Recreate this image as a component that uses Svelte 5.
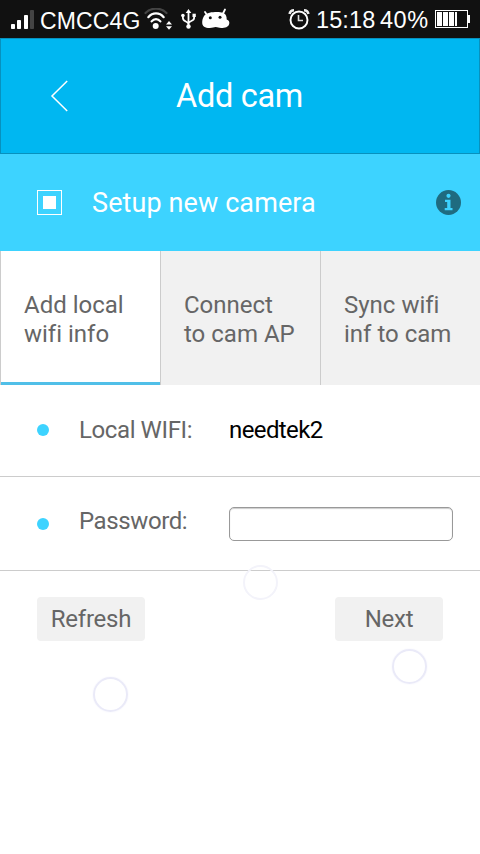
<script>
  const tabs = [
    ['Add local', 'wifi info'],
    ['Connect', 'to cam AP'],
    ['Sync wifi', 'inf to cam']
  ];
  let active = $state(0);
  let password = $state('');
  const touches = [
    { x: 260.5, y: 582.5, faint: true },
    { x: 409.5, y: 666.5, faint: false },
    { x: 110.5, y: 694.5, faint: false }
  ];
</script>

<div class="screen">
  <div class="status">
    <svg class="signal" width="24" height="20" viewBox="0 0 24 20">
      <g fill="#fff">
        <rect x="1" y="14" width="4" height="5" rx=".8" />
        <rect x="7" y="10" width="4" height="9" rx=".8" />
        <rect x="14" y="5" width="4" height="14" rx=".8" />
      </g>
      <rect x="20" y="0" width="4" height="19" rx=".8" fill="#444" />
    </svg>
    <span class="carrier">CMCC4G</span>
    <svg class="wifi" width="29" height="24" viewBox="0 0 29 24">
      <g fill="none" stroke-linecap="round">
        <path d="M1.500 5C7-.8 17-.8 22.500 5" stroke="#444" stroke-width="2.200" />
        <path d="M4.300 9.200C8.500 4.200 15.500 4.200 19.700 9.200M7.600 13.400C10 10.400 14 10.400 16.400 13.400" stroke="#fff" stroke-width="2.200" />
      </g>
      <circle cx="11.700" cy="18" r="3" fill="#fff" />
      <path d="M22 16.500 25 13l3 3.500zM22 18.300h6l-3 3.500z" fill="#fff" />
    </svg>
    <svg class="usb" width="15" height="21" viewBox="0 0 15 21">
      <path d="M7.500 3v14M7.500 15C7 12 1.900 13 1.900 9V7M7.500 14.500c.5-3 5.600-2 5.600-5.500V6" fill="none" stroke="#fff" stroke-width="1.800" />
      <path d="m7.500 0 2.800 4H4.700z" fill="#fff" />
      <circle cx="1.900" cy="6.500" r="1.800" fill="#fff" />
      <rect x="11.500" y="4.700" width="3.300" height="3.300" fill="#fff" />
      <circle cx="7.500" cy="17.500" r="2.200" fill="#fff" />
    </svg>
    <svg class="droid" width="29" height="21" viewBox="0 0 29 21">
      <path d="M4 4l2 3M24 1.500l-2 4" stroke="#fff" stroke-width="1.800" stroke-linecap="round" />
      <path d="M2.500 9C4 5.500 9 4.200 14 4c5-.3 9.500.2 11 3.500.6 1.500.7 2.800.7 4 2.300.5 3 2.500 2.500 4.500-.8 3-4.200 4-8 4-2.500 0-3.500-1-5.500-1s-3 1-6 1C4 20 1.200 18.500 1.200 14.500c0-2 .5-4 1.300-5.500z" fill="#fff" />
      <circle cx="9.300" cy="9.700" r="1.500" fill="#111" />
      <circle cx="19" cy="9.200" r="1.500" fill="#111" />
    </svg>
    <svg class="alarm" width="22" height="21" viewBox="0 0 22 21">
      <circle cx="11" cy="11" r="8.500" fill="none" stroke="#fff" stroke-width="1.900" />
      <path d="M10.500 6v5.500h4.500" fill="none" stroke="#ddd" stroke-width="1.600" />
      <path d="M1.600 5C2 2.500 3.500 1.300 6 1.300M20.400 5C20 2.500 18.500 1.300 16 1.300" fill="none" stroke="#eee" stroke-width="2.600" />
    </svg>
    <span class="clock">15:18</span>
    <span class="percent">40%</span>
    <svg class="battery" width="35" height="18" viewBox="0 0 35 18">
      <rect x=".5" y=".5" width="32" height="17" fill="none" stroke="#fff" />
      <path d="M2 2h5v14H2zM8 2h5v14H8zM14 2h5v14h-5zM20 2h2v14h-2zM33 5h2v8h-2z" fill="#fff" />
    </svg>
  </div>

  <header>
    <svg class="back" width="20" height="34" viewBox="0 0 20 34">
      <path d="M17.200 2 2 17l15.200 15" fill="none" stroke="#fff" stroke-width="1.500" />
    </svg>
    <h1>Add cam</h1>
  </header>

  <section class="setup">
    <span class="check"><span></span></span>
    <h2>Setup new camera</h2>
    <svg class="info" width="26" height="26" viewBox="0 0 26 26">
      <circle cx="12.500" cy="12.500" r="12.500" fill="#1f6b80" />
      <circle cx="12.500" cy="5.800" r="2.100" fill="#3dd3ff" />
      <path d="M9 9.700h5.500V18H16.500V20.200H8.700V18h2.500v-6.100H9z" fill="#3dd3ff" />
    </svg>
  </section>

  <nav>
    {#each tabs as lines, i}
      <button class="tab" class:active={active === i} onclick={() => (active = i)}>
        <span>{lines[0]}</span><span>{lines[1]}</span>
      </button>
    {/each}
  </nav>

  <div class="row network">
    <i class="dot"></i>
    <span class="label">Local WIFI:</span>
    <span class="value">needtek2</span>
  </div>
  <div class="row secret">
    <i class="dot"></i>
    <label class="label" for="pw">Password:</label>
    <input id="pw" type="password" bind:value={password} />
  </div>

  <div class="actions">
    <button>Refresh</button>
    <button>Next</button>
  </div>

  {#each touches as t}
    <i class="touch" class:faint={t.faint} style="left:{t.x}px;top:{t.y}px"></i>
  {/each}
</div>

<style>
  :global(body) { background: #fff; }
  .screen {
    position: relative;
    width: 480px;
    height: 854px;
    overflow: hidden;
    background: #fff;
    font-family: Roboto, sans-serif;
    color: #666;
  }
  .screen * { box-sizing: border-box; }
  svg { display: block; flex: none; }
  button { border: 0; margin: 0; color: inherit; font-family: inherit; }
  h1, h2 { margin: 0; color: #fff; font-weight: 400; white-space: nowrap; }
  .status {
    display: flex;
    align-items: flex-start;
    height: 38px;
    background: #111;
    color: #fff;
    font: 23px/26px "Liberation Sans", Arial, sans-serif;
    white-space: nowrap;
  }
  .signal { margin: 10px 0 0 10px; }
  .carrier { width: 101px; margin: 8px 0 0 6px; letter-spacing: .15px; }
  .wifi { margin: 8px 0 0 3px; }
  .usb { margin: 9px 0 0 8px; }
  .droid { margin: 8px 0 0 5px; }
  .alarm { margin: 9px 0 0 58px; }
  .clock { width: 60px; margin: 7px 0 0 6px; font-size: 23.5px; letter-spacing: .1px; }
  .percent { width: 50px; margin: 7px 0 0 4px; font-size: 23.5px; letter-spacing: .5px; }
  .battery { margin: 10px 0 0 5px; }
  header {
    display: flex;
    align-items: center;
    height: 116px;
    background: #00b7f1;
    border: 1px solid #0791be;
  }
  .back { margin-left: 49px; }
  h1 { margin-left: 106px; font-size: 32.5px; line-height: 40px; letter-spacing: -.3px; }
  .setup { display: flex; align-items: center; height: 97px; background: #3dd3ff; }
  .check {
    display: flex;
    align-items: center;
    justify-content: center;
    width: 25px;
    height: 25px;
    margin-left: 37px;
    border: 1px solid #fff;
  }
  .check span { width: 13px; height: 13px; background: #fff; }
  h2 { width: 344px; margin-left: 30px; font-size: 27px; line-height: 32px; letter-spacing: .1px; }
  nav { display: flex; height: 134px; }
  .tab {
    display: flex;
    flex: 1;
    flex-direction: column;
    padding: 40px 0 0 23px;
    background: #f1f1f1;
    border-left: 1px solid #ccc;
    font-size: 24px;
    font-variant-ligatures: none;
    line-height: 29px;
    text-align: left;
    white-space: nowrap;
  }
  .tab.active { background: linear-gradient(#50bfe8, #50bfe8) bottom / 100% 3px no-repeat border-box #fff; }
  .row { display: flex; border-bottom: 1px solid #ccc; font-size: 24px; line-height: 28px; white-space: nowrap; }
  .network { height: 92px; }
  .secret { height: 94px; }
  .dot { width: 12px; height: 12px; margin: 39px 0 0 37px; border-radius: 50%; background: #3dd3ff; }
  .secret .dot { margin-top: 41px; }
  .label { width: 150px; margin: 31px 0 0 30px; letter-spacing: -.4px; }
  .secret .label { margin-top: 30px; }
  .value { margin-top: 31px; color: #000; letter-spacing: -.6px; }
  input {
    width: 224px;
    height: 34px;
    margin: 30px 0 0;
    padding: 0 6px;
    border: 1px solid #999;
    border-radius: 5px;
    background: #fff;
    box-shadow: inset 0 1px 1px #ccc;
    outline: none;
  }
  .actions { display: flex; justify-content: space-between; padding: 26px 37px 0; }
  .actions button {
    width: 108px;
    height: 44px;
    padding: 0;
    border-radius: 4px;
    background: #f1f1f1;
    font-size: 24px;
    line-height: 44px;
    letter-spacing: -.25px;
  }
  .touch {
    position: absolute;
    width: 35px;
    height: 35px;
    margin: -17.500px 0 0 -17.500px;
    border: 2px solid #eaeaf8;
    border-radius: 50%;
    box-shadow: 0 0 2px #f2f2fc;
  }
  .faint { border-color: #f3f3fa; box-shadow: none; }
</style>
